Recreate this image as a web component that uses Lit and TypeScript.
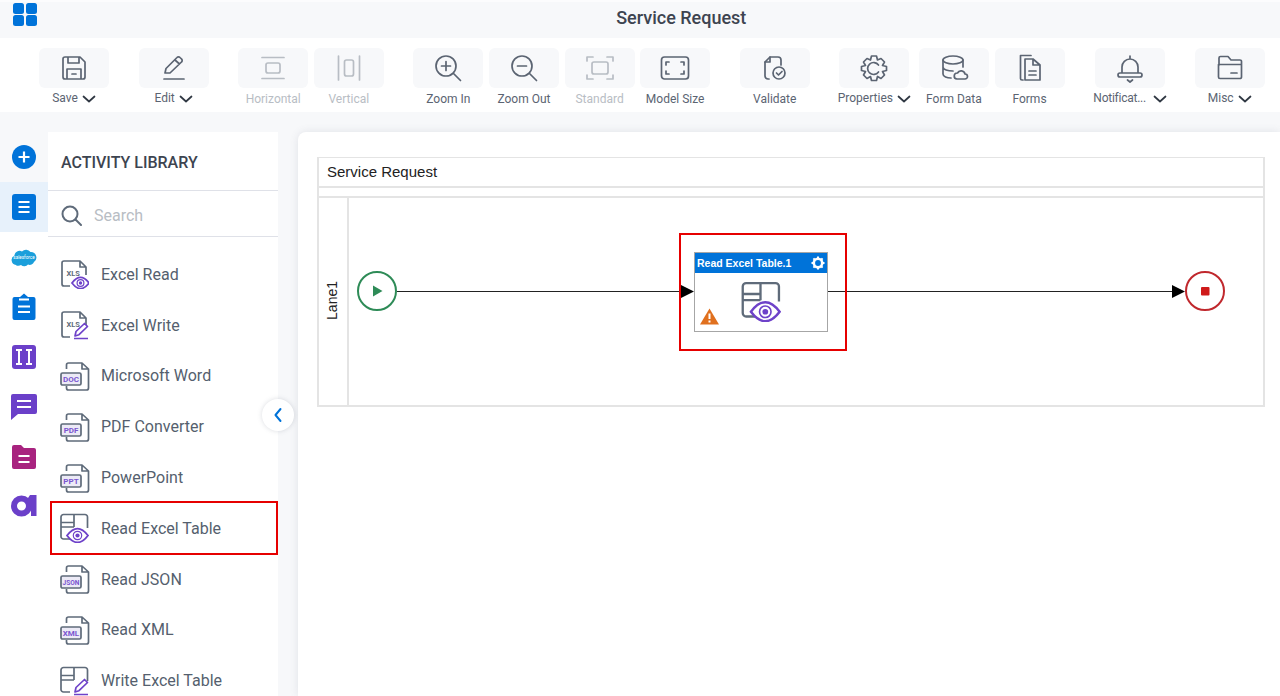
import { LitElement, html, css, svg } from 'lit';
import { customElement } from 'lit/decorators.js';

const eye = (cx: number, cy: number, w: number) => {
  const h = w * 0.66;
  return svg`<path d="M${cx - w / 2} ${cy} Q${cx} ${cy - h} ${cx + w / 2} ${cy} Q${cx} ${cy + h} ${cx - w / 2} ${cy}Z" fill="#fff" stroke="#6e42c9" stroke-width="1.8"/>
    <circle cx="${cx}" cy="${cy}" r="${w * 0.2}" fill="none" stroke="#6e42c9" stroke-width="1.2"/>
    <circle cx="${cx}" cy="${cy}" r="${w * 0.1}" fill="#6e42c9"/>`;
};

const pencil = svg`<path d="M16 26 L17 21.5 L25.5 13.5 L28.5 16.5 L20 24.7Z M15 28.5 H29" fill="#fff" stroke="#6e42c9" stroke-width="1.7" stroke-linejoin="round"/>`;

const fileOutline = svg`<path d="M7.5 8 V4 a2 2 0 0 1 2 -2 H23 L29.5 8 V27 a2 2 0 0 1 -2 2 H9.5 a2 2 0 0 1 -2 -2 V25 M23 2 V8 H29.5" fill="none" stroke="#5f6b7a" stroke-width="1.7" stroke-linejoin="round"/>`;

const sheetFile = (label: string, badge: unknown) => svg`<svg width="30" height="30" viewBox="0 0 30 30">
  <path d="M3 25 V4 a2 2 0 0 1 2 -2 H21 L27 8 V16 M21 2 V8 H27 M3 25 a2 2 0 0 0 2 2 H11" fill="none" stroke="#5f6b7a" stroke-width="1.7" stroke-linejoin="round"/>
  <text x="7.5" y="17" font-family="Roboto, sans-serif" font-size="7.5" font-weight="700" fill="#5f6b7a">${label}</text>
  ${badge}
</svg>`;

const labelFile = (label: string) => svg`<svg width="31" height="30" viewBox="0 0 31 30">
  ${fileOutline}
  <rect x="2" y="12" width="20" height="12" rx="1.5" fill="#eceaf6" stroke="#5f6b7a" stroke-width="1.7"/>
  <text x="12" y="20.8" text-anchor="middle" font-family="Roboto, sans-serif" font-size="${label.length > 3 ? 6.6 : 8}" font-weight="700" fill="#7a55d0">${label}</text>
</svg>`;

const tableLines = svg`<path d="M11 26 H4.5 a2.5 2.5 0 0 1 -2.5 -2.5 V4 a2.5 2.5 0 0 1 2.5 -2.5 H26 a2.5 2.5 0 0 1 2.5 2.5 V15 M2 9.5 H15 M2 14 H15 M15 1.5 V14" fill="none" stroke="#5f6b7a" stroke-width="1.7"/>`;

const readTable = (size: number) => svg`<svg width="${size}" height="${size}" viewBox="0 0 30 30">
  ${tableLines}${eye(18.5, 22.5, 21)}
</svg>`;

const writeTable = svg`<svg width="31" height="30" viewBox="0 0 31 30">
  ${tableLines}${pencil}
</svg>`;

const library: [string, unknown][] = [
  ['Excel Read', sheetFile('XLS', eye(21.5, 24, 17))],
  ['Excel Write', sheetFile('XLS', pencil)],
  ['Microsoft Word', labelFile('DOC')],
  ['PDF Converter', labelFile('PDF')],
  ['PowerPoint', labelFile('PPT')],
  ['Read Excel Table', readTable(30)],
  ['Read JSON', labelFile('JSON')],
  ['Read XML', labelFile('XML')],
  ['Write Excel Table', writeTable],
];

const tool = (body: unknown) => svg`<svg width="30" height="30" viewBox="0 0 30 30" fill="none" stroke="currentColor" stroke-width="1.7" stroke-linecap="round" stroke-linejoin="round">${body}</svg>`;

const icons: Record<string, unknown> = {
  save: tool(svg`<path d="M6 4 H21 L26 9 V24 a2 2 0 0 1 -2 2 H6 a2 2 0 0 1 -2 -2 V6 a2 2 0 0 1 2 -2Z M9 4 V10 H20 V4 M8 26 V16 H22 V26 M13 21 H17"/>`),
  edit: tool(svg`<path d="M6 20 L7 15.5 L18 4.5 a2 2 0 0 1 3 0 L22.5 6 a2 2 0 0 1 0 3 L11 20Z M16 7 L20.5 11 M5 26 H25"/>`),
  horizontal: tool(svg`<path d="M4 4.5 H26 M4 25.5 H26"/><rect x="8" y="10" width="14" height="10" rx="2"/>`),
  vertical: tool(svg`<path d="M4.5 3 V27 M25.5 3 V27"/><rect x="10.5" y="7" width="9" height="16" rx="2"/>`),
  zoomIn: tool(svg`<circle cx="13" cy="13" r="10"/><path d="M20.5 20.5 L27.5 27.5 M8.5 13 H17.5 M13 8.5 V17.5"/>`),
  zoomOut: tool(svg`<circle cx="13" cy="13" r="10"/><path d="M20.5 20.5 L27.5 27.5 M8.5 13 H17.5"/>`),
  standard: tool(svg`<path d="M2 8 V4 H8 M22 4 H28 V8 M2 22 V26 H8 M22 26 H28 V22"/><rect x="7" y="9" width="16" height="12" rx="2"/>`),
  modelSize: tool(svg`<rect x="1.5" y="4" width="27" height="22" rx="3"/><path d="M6 12 V9 H9 M21 9 H24 V12 M6 18 V21 H9 M21 21 H24 V18"/>`),
  validate: tool(svg`<path d="M9 26 H8 a3 3 0 0 1 -3 -3 V9 L10 4 H18 a3 3 0 0 1 3 3 V12"/><path d="M5 9 H10 V4"/><circle cx="19" cy="20" r="6"/><path d="M16.5 20 L18.5 22 L22 18.5"/>`),
  properties: tool(svg`<path d="M12.5 3 H17.5 L18.5 7 L22 5.5 L25.5 9 L23.5 12.5 L27.5 13.5 V17.5 L23.5 18.5 L25.5 22 L22 25.5 L18.5 23.5 L17.5 27.5 H12.5 L11.5 23.5 L8 25.5 L4.5 22 L6.5 18.5 L2.5 17.5 V13.5 L6.5 12.5 L4.5 9 L8 5.5 L11.5 7Z"/><path d="M19.5 12 a6 6 0 1 0 0 7"/>`),
  formData: tool(svg`<ellipse cx="14" cy="7" rx="10" ry="4"/><path d="M4 7 V21 C4 23.5 8 25 12 25 M24 7 V14 M4 14 C4 16.5 9 18 14 18 M18 26 H26 a2.5 2.5 0 0 0 0 -5 a4 4 0 0 0 -7.5 -1 a3 3 0 0 0 -.5 6Z"/>`),
  forms: tool(svg`<path d="M8 27 H7 a1.5 1.5 0 0 1 -1.5 -1.5 V2.5 H16"/><path d="M10 6 H18 L25 12 V27 H10Z M18 6 V12 H25 M14 18 H21 M14 22 H21"/>`),
  notifications: tool(svg`<path d="M15 3 V6 M7 20 V14 a8 8 0 0 1 16 0 V20 M5 20 H25 a2 2 0 0 1 0 4 H5 a2 2 0 0 1 0 -4Z M12.5 27 L15 29 L17.5 27"/>`),
  misc: tool(svg`<path d="M4 12 V5 a1.5 1.5 0 0 1 1.5 -1.5 H13 L16 7 H25 a1.5 1.5 0 0 1 1.5 1.5 V12 M3.5 11.5 H26.5 V24 a1.5 1.5 0 0 1 -1.5 1.5 H5 a1.5 1.5 0 0 1 -1.5 -1.5Z M16 20 H22"/>`),
};

type Tool = { label: string; icon: string; menu?: boolean; off?: boolean };

const groups: Tool[][] = [
  [{ label: 'Save', icon: 'save', menu: true }],
  [{ label: 'Edit', icon: 'edit', menu: true }],
  [{ label: 'Horizontal', icon: 'horizontal', off: true }, { label: 'Vertical', icon: 'vertical', off: true }],
  [
    { label: 'Zoom In', icon: 'zoomIn' },
    { label: 'Zoom Out', icon: 'zoomOut' },
    { label: 'Standard', icon: 'standard', off: true },
    { label: 'Model Size', icon: 'modelSize' },
  ],
  [{ label: 'Validate', icon: 'validate' }],
  [
    { label: 'Properties', icon: 'properties', menu: true },
    { label: 'Form Data', icon: 'formData' },
    { label: 'Forms', icon: 'forms' },
  ],
  [{ label: 'Notificat...', icon: 'notifications', menu: true }],
  [{ label: 'Misc', icon: 'misc', menu: true }],
];

const chevron = html`<svg class="chev" width="14" height="8" viewBox="0 0 14 8" fill="none" stroke="#2f3742" stroke-width="1.7" stroke-linecap="round" stroke-linejoin="round"><path d="M1.5 1.5 L7 6.5 L12.5 1.5"/></svg>`;

const rail = [
  html`<svg width="26" height="26" viewBox="0 0 26 26"><circle cx="13" cy="13" r="12" fill="#0073d9"/><path d="M13 7.5 V18.5 M7.5 13 H18.5" stroke="#fff" stroke-width="2.2"/></svg>`,
  html`<svg width="26" height="28" viewBox="0 0 26 28"><rect x="1" y="1" width="24" height="26" rx="3" fill="#0073d9"/><path d="M7.5 9 H18.5 M7.5 14 H18.5 M7.5 19 H18.5" stroke="#fff" stroke-width="1.9"/></svg>`,
  html`<svg width="28" height="20" viewBox="0 0 28 20"><path d="M6 18 a5 5 0 0 1 -1.5 -9.5 a5 5 0 0 1 7.5 -4 a5.5 5.5 0 0 1 8.5 .5 a5.5 5.5 0 0 1 3.5 10 a4.5 4.5 0 0 1 -6 2.5 a5 5 0 0 1 -7 .5 a5 5 0 0 1 -5 .2Z" fill="#1b9fdb"/><text x="14" y="12" text-anchor="middle" font-family="Roboto, sans-serif" font-size="4.6" fill="#fff">salesforce</text></svg>`,
  html`<svg width="26" height="28" viewBox="0 0 26 28"><path d="M3.5 4 H9 L13 .5 L17 4 H22.5 a2 2 0 0 1 2 2 V25 a2 2 0 0 1 -2 2 H3.5 a2 2 0 0 1 -2 -2 V6 a2 2 0 0 1 2 -2Z" fill="#0073d9"/><path d="M8 6.5 H18 M7 13.5 H19 M7 19 H19" stroke="#fff" stroke-width="2"/></svg>`,
  html`<svg width="26" height="26" viewBox="0 0 26 26"><rect x="1" y="1" width="24" height="24" rx="3" fill="#6b40c9"/><path d="M5 6 H11 M8 6 V20 M5 20 H11 M15 6 H21 M18 6 V20 M15 20 H21" stroke="#fff" stroke-width="2"/></svg>`,
  html`<svg width="28" height="28" viewBox="0 0 28 28"><path d="M3 1 H25 a2 2 0 0 1 2 2 V19 a2 2 0 0 1 -2 2 H8 L1 27 V3 a2 2 0 0 1 2 -2Z" fill="#6b40c9"/><path d="M7 8 H21 M7 14 H21" stroke="#fff" stroke-width="2.2"/></svg>`,
  html`<svg width="26" height="26" viewBox="0 0 26 26"><path d="M1 3 a2 2 0 0 1 2 -2 H10 L13 4 H23 a2 2 0 0 1 2 2 V23 a2 2 0 0 1 -2 2 H3 a2 2 0 0 1 -2 -2Z" fill="#a8237f"/><path d="M7.5 12 H18.5 M7.5 18 H18.5" stroke="#fff" stroke-width="2.2"/></svg>`,
  html`<svg width="26" height="24" viewBox="0 0 26 24"><path d="M10.5 .5 a10.5 10.5 0 1 0 0 21 a10.5 10.5 0 1 0 0 -21Z M10.5 6.5 a4.5 4.5 0 1 1 0 9 a4.5 4.5 0 1 1 0 -9Z" fill="#6b40c9" fill-rule="evenodd"/><path d="M15 6 L19 0 H25.5 V21 H20 L20 12Z" fill="#6b40c9"/></svg>`,
];

@customElement('app-root')
export class AppRoot extends LitElement {
  static styles = css`
    :host {
      display: block;
      width: 1280px;
      height: 696px;
      overflow: hidden;
      background: #f7f8fa;
      font-family: Roboto, 'Liberation Sans', sans-serif;
      color: #555f6e;
    }

    .title-bar {
      height: 36px;
      border-top: 2px solid #fcfcfd;
      display: flex;
      align-items: flex-start;
      padding-left: 13px;
    }

    .logo {
      display: grid;
      grid-template-columns: 11px 11px;
      gap: 1.5px;
      margin-top: 1px;
    }

    .logo span {
      height: 10.5px;
      background: #0073d9;
      border-radius: 2.5px;
    }

    .title-bar h1 {
      flex: 1;
      margin: 5px 0 0;
      padding-left: 46px;
      text-align: center;
      font-size: 18px;
      line-height: 21px;
      font-weight: 500;
      color: #3d4450;
    }

    .toolbar {
      height: 64px;
      padding: 10px 0 0 39px;
      background: #fff;
      display: flex;
      gap: 29.6px;
    }

    .group {
      display: flex;
      gap: 5.6px;
    }

    .group:nth-child(6) .tool:nth-child(2) {
      margin-left: 4px;
    }

    .group:nth-child(7) {
      margin-left: 1px;
    }

    .tool {
      width: 70px;
      display: flex;
      flex-direction: column;
      align-items: center;
      color: #5b6472;
    }

    .tool.off {
      color: #b8bdc4;
    }

    .tool-icon {
      width: 70px;
      height: 40px;
      background: #f7f8fa;
      border-radius: 6px;
      display: flex;
      align-items: center;
      justify-content: center;
    }

    .tool-label {
      margin-top: 4px;
      height: 15px;
      font-size: 12px;
      line-height: 15px;
      white-space: nowrap;
      display: flex;
      align-items: center;
      gap: 4px;
    }

    .tool.menu .tool-label {
      margin-top: 3px;
    }

    .tool-text.long {
      margin-right: 3px;
      letter-spacing: -0.25px;
    }

    .body {
      margin-top: 20px;
      height: 564px;
      display: flex;
    }

    .rail {
      width: 48px;
      background: linear-gradient(#f7f8fa 50px, #fff 100px);
    }

    .rail div {
      height: 50px;
      display: flex;
      align-items: center;
      justify-content: center;
    }

    .rail div.active {
      background: #e7f1fb;
    }

    .panel {
      width: 230px;
      background: #fff;
      position: relative;
      flex: none;
    }

    .panel h2 {
      margin: 0;
      height: 59px;
      padding: 21px 0 0 13px;
      box-sizing: border-box;
      font-size: 16px;
      line-height: 19px;
      font-weight: 500;
      color: #3d4450;
      border-bottom: 1px solid #dfe1e8;
    }

    .search {
      height: 41px;
      padding: 4px 0 0 13px;
      display: flex;
      align-items: center;
      gap: 12px;
      border-bottom: 1px solid #dfe1e8;
      font-size: 16px;
      color: #b8bdc4;
    }

    .items {
      padding-top: 12px;
    }

    .item {
      height: 50.8px;
      display: flex;
      align-items: center;
      padding-left: 11px;
      font-size: 16px;
      position: relative;
    }

    .item svg {
      flex: none;
    }

    .item span {
      position: absolute;
      left: 53px;
    }

    .item.marked::after {
      content: '';
      position: absolute;
      inset: -2px 0 -1px 2px;
      border: 2px solid #e60000;
    }

    .collapse {
      position: absolute;
      left: 214px;
      top: 267px;
      width: 32px;
      height: 32px;
      border-radius: 50%;
      background: #fff;
      box-shadow: 0 0 5px rgba(90, 100, 120, 0.22);
      display: flex;
      align-items: center;
      justify-content: center;
    }

    .canvas {
      flex: 1;
      margin-left: 20px;
      background: #fff;
      border-top-left-radius: 8px;
      box-shadow: 0 0 8px rgba(90, 100, 120, 0.14);
      padding: 25px 15px 0 19px;
      font-family: 'Liberation Sans', Arial, sans-serif;
      color: #222;
    }

    .pool {
      height: 250px;
      box-sizing: border-box;
      border: 2px solid #e4e4e4;
      border-top-width: 1px;
      display: flex;
      flex-direction: column;
    }

    .pool-title {
      height: 28px;
      padding-left: 8px;
      font-size: 15px;
      line-height: 28px;
      border-bottom: 2px solid #e4e4e4;
      flex: none;
    }

    .pool-gap {
      height: 8px;
      border-bottom: 2px solid #e4e4e4;
      flex: none;
    }

    .lane {
      flex: 1;
      position: relative;
      display: flex;
    }

    .lane-name {
      width: 30px;
      padding-right: 3px;
      box-sizing: border-box;
      border-right: 2px solid #e4e4e4;
      display: flex;
      align-items: center;
      justify-content: center;
      flex: none;
    }

    .lane-name span {
      writing-mode: vertical-rl;
      transform: rotate(180deg);
      font-size: 14px;
      margin-top: -2px;
    }

    .edges {
      position: absolute;
      left: 0;
      top: 0;
    }

    .node {
      position: absolute;
      left: 375px;
      top: 54px;
      width: 134px;
      height: 80px;
      box-sizing: border-box;
      border: 1px solid #a6a6a6;
      background: #fff;
    }

    .node-head {
      height: 20px;
      background: #0073d9;
      color: #fff;
      font-size: 10.5px;
      font-weight: 700;
      line-height: 20px;
      padding-left: 2px;
      display: flex;
      justify-content: space-between;
      align-items: center;
    }

    .node-head svg {
      margin-right: 2px;
    }

    .node-icon {
      position: absolute;
      left: 45px;
      top: 28px;
    }

    .warn {
      position: absolute;
      left: 5px;
      top: 55px;
    }

    .mark {
      position: absolute;
      left: 360px;
      top: 35px;
      width: 168px;
      height: 118px;
      box-sizing: border-box;
      border: 2px solid #e60000;
    }
  `;

  private renderTool(t: Tool) {
    const cls = `tool ${t.off ? 'off' : ''} ${t.menu ? 'menu' : 'plain'}`;
    const textCls = `tool-text ${t.label === 'Notificat...' ? 'long' : ''}`;
    return html`<div class=${cls}>
      <div class="tool-icon">${icons[t.icon]}</div>
      <div class="tool-label"><span class=${textCls}>${t.label}</span>${t.menu ? chevron : ''}</div>
    </div>`;
  }

  render() {
    return html`
      <div class="title-bar">
        <div class="logo"><span></span><span></span><span></span><span></span></div>
        <h1>Service Request</h1>
      </div>
      <div class="toolbar">
        ${groups.map(g => html`<div class="group">${g.map(t => this.renderTool(t))}</div>`)}
      </div>
      <div class="body">
        <div class="rail">
          ${rail.map((r, i) => html`<div class=${i === 1 ? 'active' : ''}>${r}</div>`)}
        </div>
        <div class="panel">
          <h2>ACTIVITY LIBRARY</h2>
          <div class="search">
            <svg width="21" height="21" viewBox="0 0 21 21" fill="none" stroke="#5f6b7a" stroke-width="2" stroke-linecap="round"><circle cx="9" cy="9" r="7.5"/><path d="M14.5 14.5 L20 20"/></svg>
            Search
          </div>
          <div class="items">
            ${library.map(([name, icon]) => html`<div class="item ${name === 'Read Excel Table' ? 'marked' : ''}">${icon}<span>${name}</span></div>`)}
          </div>
          <div class="collapse">
            <svg width="10" height="16" viewBox="0 0 10 16" fill="none" stroke="#0073d9" stroke-width="2" stroke-linecap="round" stroke-linejoin="round"><path d="M7.5 2 L2.5 8 L7.5 14"/></svg>
          </div>
        </div>
        <div class="canvas">
          <div class="pool">
            <div class="pool-title">Service Request</div>
            <div class="pool-gap"></div>
            <div class="lane">
              <div class="lane-name"><span>Lane1</span></div>
              <svg class="edges" width="944" height="208" viewBox="319 198 944 208">
                <path d="M397 291.5 H682 M828 291.5 H1174" stroke="#222" stroke-width="1.2"/>
                <path d="M681 285 L694 291.5 L681 298Z M1172 285 L1185 291.5 L1172 298Z" fill="#000"/>
                <circle cx="377" cy="291" r="19" fill="#fff" stroke="#2e8b57" stroke-width="2"/>
                <path d="M373 285.5 L382.5 291 L373 296.5Z" fill="#2e8b57"/>
                <circle cx="1205" cy="291" r="19" fill="#fff" stroke="#c0282d" stroke-width="2"/>
                <rect x="1201" y="287" width="8.5" height="8.5" rx="1" fill="#cf1a1a"/>
              </svg>
              <div class="mark"></div>
              <div class="node">
                <div class="node-head">
                  <span>Read Excel Table.1</span>
                  <svg width="14" height="14" viewBox="0 0 14 14"><circle cx="7" cy="7" r="4.2" fill="none" stroke="#fff" stroke-width="2.6"/><path d="M7 .5 V13.5 M.5 7 H13.5 M2.4 2.4 L11.6 11.6 M11.6 2.4 L2.4 11.6" stroke="#fff" stroke-width="2" stroke-dasharray="2.4 8.2 2.6 0"/></svg>
                </div>
                <div class="node-icon">${readTable(41)}</div>
                <svg class="warn" width="19" height="17" viewBox="0 0 19 17"><path d="M9.5 .5 L19 16.5 H0Z" fill="#e0701e"/><path d="M9.5 5.5 V11 M9.5 12.5 V14.5" stroke="#fff" stroke-width="2"/></svg>
              </div>
            </div>
          </div>
        </div>
      </div>
    `;
  }
}
